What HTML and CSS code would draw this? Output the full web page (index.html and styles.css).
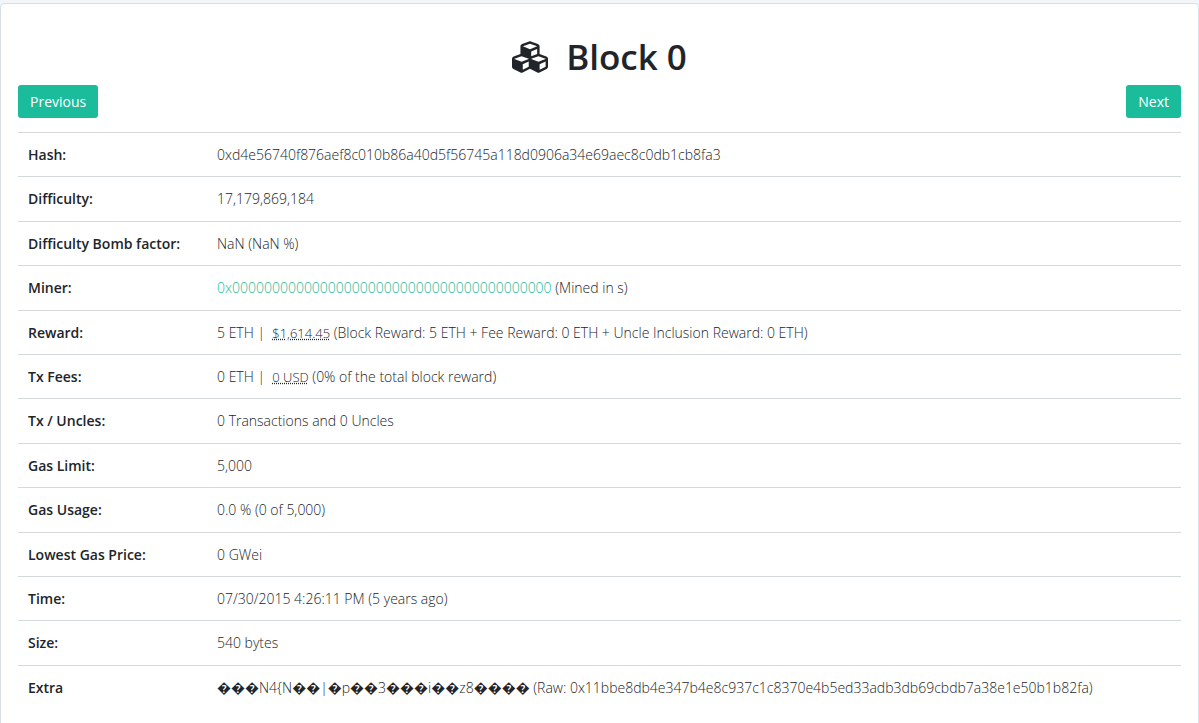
FILE: index.html
```html
<!DOCTYPE html>
<html lang="en">
<head>
  <meta charset="UTF-8">
  <meta name="viewport" content="width=device-width, initial-scale=1.0">
  <title>Block 0</title>
  <link rel="stylesheet" href="styles.css">
</head>
<body>
  <main class="card">
    <h1 class="title">
      <svg class="title-icon" viewBox="0 0 512 512" aria-hidden="true"><path fill="currentColor" d="M488.6 250.2L392 214V105.5c0-15-9.3-28.4-23.4-33.7l-100-37.5c-8.1-3.1-17.1-3.1-25.3 0l-100 37.5c-14.1 5.3-23.4 18.7-23.4 33.7V214l-96.6 36.2C9.3 255.5 0 268.9 0 283.9V394c0 13.6 7.7 26.1 19.9 32.2l100 50c10.1 5.1 22.1 5.1 32.2 0l103.9-52 103.9 52c10.1 5.1 22.1 5.1 32.2 0l100-50c12.2-6.1 19.9-18.6 19.9-32.2V283.9c0-15-9.3-28.4-23.4-33.7zM358 214.8l-85 31.9v-68.2l85-37v73.3zM154 104.1l102-38.2 102 38.2v.6l-102 41.4-102-41.4v-.6zm84 291.1l-85 42.5v-79.1l85-38.8v75.4zm0-112l-102 41.4-102-41.4v-.6l102-38.2 102 38.2v.6zm240 112l-85 42.5v-79.1l85-38.8v75.4zm0-112l-102 41.4-102-41.4v-.6l102-38.2 102 38.2v.6z"/></svg>
      Block 0
    </h1>

    <nav class="pager">
      <a href="#" class="btn">Previous</a>
      <a href="#" class="btn">Next</a>
    </nav>

    <table class="details">
      <tbody>
        <tr>
          <th scope="row">Hash:</th>
          <td>0xd4e56740f876aef8c010b86a40d5f56745a118d0906a34e69aec8c0db1cb8fa3</td>
        </tr>
        <tr>
          <th scope="row">Difficulty:</th>
          <td>17,179,869,184</td>
        </tr>
        <tr>
          <th scope="row">Difficulty Bomb factor:</th>
          <td>NaN (NaN %)</td>
        </tr>
        <tr>
          <th scope="row">Miner:</th>
          <td><a href="#">0x0000000000000000000000000000000000000000</a> (Mined in s)</td>
        </tr>
        <tr>
          <th scope="row">Reward:</th>
          <td>5 ETH |&nbsp; <abbr>$1,614.45</abbr> (Block Reward: 5 ETH + Fee Reward: 0 ETH + Uncle Inclusion Reward: 0 ETH)</td>
        </tr>
        <tr>
          <th scope="row">Tx Fees:</th>
          <td>0 ETH |&nbsp; <abbr>0 USD</abbr> (0% of the total block reward)</td>
        </tr>
        <tr>
          <th scope="row">Tx / Uncles:</th>
          <td>0 Transactions and 0 Uncles</td>
        </tr>
        <tr>
          <th scope="row">Gas Limit:</th>
          <td>5,000</td>
        </tr>
        <tr>
          <th scope="row">Gas Usage:</th>
          <td>0.0 % (0 of 5,000)</td>
        </tr>
        <tr>
          <th scope="row">Lowest Gas Price:</th>
          <td>0 GWei</td>
        </tr>
        <tr>
          <th scope="row">Time:</th>
          <td>07/30/2015 4:26:11 PM (5 years ago)</td>
        </tr>
        <tr>
          <th scope="row">Size:</th>
          <td>540 bytes</td>
        </tr>
        <tr>
          <th scope="row">Extra</th>
          <td>&#xFFFD;&#xFFFD;&#xFFFD;N4{N&#xFFFD;&#xFFFD;|&#xFFFD;p&#xFFFD;&#xFFFD;3&#xFFFD;&#xFFFD;&#xFFFD;i&#xFFFD;&#xFFFD;z8&#xFFFD;&#xFFFD;&#xFFFD;&#xFFFD; (Raw: 0x11bbe8db4e347b4e8c937c1c8370e4b5ed33adb3db69cbdb7a38e1e50b1b82fa)</td>
        </tr>
      </tbody>
    </table>
  </main>
</body>
</html>
```
FILE: styles.css
```css
* {
  box-sizing: border-box;
}

body {
  margin: 0;
  padding-top: 3px;
  background: #f3f6f9;
  color: #212529;
  font-family: "Open Sans", sans-serif;
  font-size: 14px;
  font-weight: 300;
  line-height: 1.6;
}

.card {
  min-height: 100vh;
  padding: 32px 17px;
  background: #fff;
  border: 1px solid #d9e0e4;
  border-radius: 4px;
}

.title {
  display: flex;
  justify-content: center;
  align-items: center;
  gap: 18px;
  margin: 0 0 7px;
  font-size: 35px;
  font-weight: 600;
  line-height: 42px;
}

.title-icon {
  width: 36px;
  height: 36px;
}

.pager {
  display: flex;
  justify-content: space-between;
  margin-bottom: 14px;
}

.btn {
  padding: 5px 12px;
  background: #1abc9c;
  border-radius: 3px;
  color: #fff;
  font-weight: 400;
  line-height: 23px;
  text-decoration: none;
}

.details {
  width: 100%;
  border-spacing: 0;
}

.details th,
.details td {
  padding: 11px 10px 10px;
  border-top: 1px solid #d6d9dc;
  text-align: left;
  vertical-align: top;
}

.details th {
  width: 189px;
  font-weight: 600;
  white-space: nowrap;
}

.details td {
  overflow-wrap: anywhere;
}

.details a {
  color: #1abc9c;
  text-decoration: none;
}

.details abbr {
  font-size: 13px;
  text-decoration: underline dotted;
}

@media (max-width: 768px) {
  .details th {
    width: auto;
    white-space: normal;
  }
}
```
